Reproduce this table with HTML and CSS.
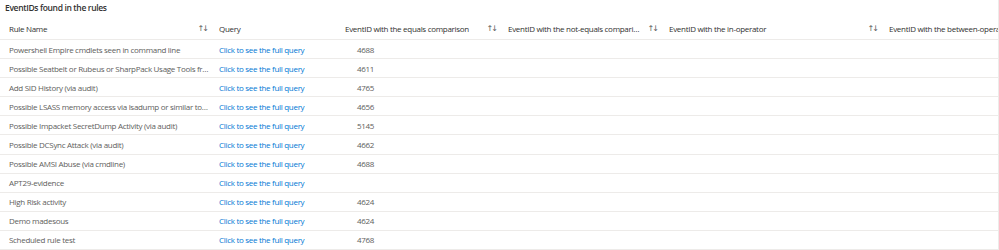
FILE: index.html
```html
<!DOCTYPE html>
<html>
<head>
<meta charset="utf-8">
<link rel="stylesheet" href="styles.css">
</head>
<body>
<div class="panel">
  <div class="title">EventIDs found in the rules</div>
  <table class="grid">
    <colgroup>
      <col class="c1"><col class="c2"><col class="c3"><col class="c4"><col class="c5"><col class="c6">
    </colgroup>
    <thead>
      <tr>
        <th><div class="hd"><span class="hl">Rule Name</span><span class="sort">↑↓</span></div></th>
        <th><div class="hd"><span class="hl">Query</span></div></th>
        <th><div class="hd"><span class="hl">EventID with the equals comparison</span><span class="sort">↑↓</span></div></th>
        <th><div class="hd"><span class="hl">EventID with the not-equals comparison</span><span class="sort">↑↓</span></div></th>
        <th><div class="hd"><span class="hl">EventID with the in-operator</span><span class="sort">↑↓</span></div></th>
        <th><div class="hd"><span class="hl">EventID with the between-operator</span><span class="sort">↑↓</span></div></th>
      </tr>
    </thead>
    <tbody>
      <tr><td>Powershell Empire cmdlets seen in command line</td><td class="q">Click to see the full query</td><td class="num">4688</td><td></td><td></td><td></td></tr>
      <tr><td>Possible Seatbelt or Rubeus or SharpPack Usage Tools from the command line</td><td class="q">Click to see the full query</td><td class="num">4611</td><td></td><td></td><td></td></tr>
      <tr><td>Add SID History (via audit)</td><td class="q">Click to see the full query</td><td class="num">4765</td><td></td><td></td><td></td></tr>
      <tr><td>Possible LSASS memory access via lsadump or similar tools</td><td class="q">Click to see the full query</td><td class="num">4656</td><td></td><td></td><td></td></tr>
      <tr><td>Possible Impacket SecretDump Activity (via audit)</td><td class="q">Click to see the full query</td><td class="num">5145</td><td></td><td></td><td></td></tr>
      <tr><td>Possible DCSync Attack (via audit)</td><td class="q">Click to see the full query</td><td class="num">4662</td><td></td><td></td><td></td></tr>
      <tr><td>Possible AMSI Abuse (via cmdline)</td><td class="q">Click to see the full query</td><td class="num">4688</td><td></td><td></td><td></td></tr>
      <tr><td>APT29-evidence</td><td class="q">Click to see the full query</td><td class="num"></td><td></td><td></td><td></td></tr>
      <tr><td>High Risk activity</td><td class="q">Click to see the full query</td><td class="num">4624</td><td></td><td></td><td></td></tr>
      <tr><td>Demo madesous</td><td class="q">Click to see the full query</td><td class="num">4624</td><td></td><td></td><td></td></tr>
      <tr><td>Scheduled rule test</td><td class="q">Click to see the full query</td><td class="num">4768</td><td></td><td></td><td></td></tr>
    </tbody>
  </table>
</div>
</body>
</html>
```
FILE: styles.css
```css
html, body {
  margin: 0;
  padding: 0;
  background: #ffffff;
}
body {
  font-family: "Open Sans", "Noto Sans", sans-serif;
  font-size: 8px;
  letter-spacing: -0.3px;
  color: #605e5c;
  overflow: hidden;
  width: 999px;
  height: 250px;
}
.panel {
  width: 999px;
  overflow: hidden;
  border-right: 1px solid #edebe9;
  box-sizing: border-box;
}
.title {
  font-weight: 600;
  color: #323130;
  font-size: 8.5px;
  letter-spacing: -0.35px;
  padding: 2px 0 0 5px;
  height: 15px;
  line-height: 12px;
}
.grid {
  border-collapse: collapse;
  table-layout: fixed;
  width: 1100px;
}
.c1 { width: 210px; }
.c2 { width: 126px; }
.c3 { width: 163px; }
.c4 { width: 161px; }
.c5 { width: 220px; }
.c6 { width: 220px; }
th {
  height: 22px;
  padding: 0;
  font-weight: 400;
  color: #323130;
  text-align: left;
  border-bottom: 1px solid #edebe9;
}
.hd {
  display: flex;
  align-items: center;
  padding: 0 1px 0 9px;
}
.hl {
  flex: 1;
  white-space: nowrap;
  overflow: hidden;
  text-overflow: ellipsis;
}
.sort {
  color: #605e5c;
  font-family: "DejaVu Sans", sans-serif;
  font-size: 8px;
  letter-spacing: -2px;
  margin-left: 5px;
  padding-right: 2px;
}
td {
  height: 18.1px;
  padding: 0 1px 0 9px;
  white-space: nowrap;
  overflow: hidden;
  text-overflow: ellipsis;
  border-bottom: 1px solid #edebe9;
}
td.q { color: #0078d4; }
td.num { padding-left: 21px; }
```
